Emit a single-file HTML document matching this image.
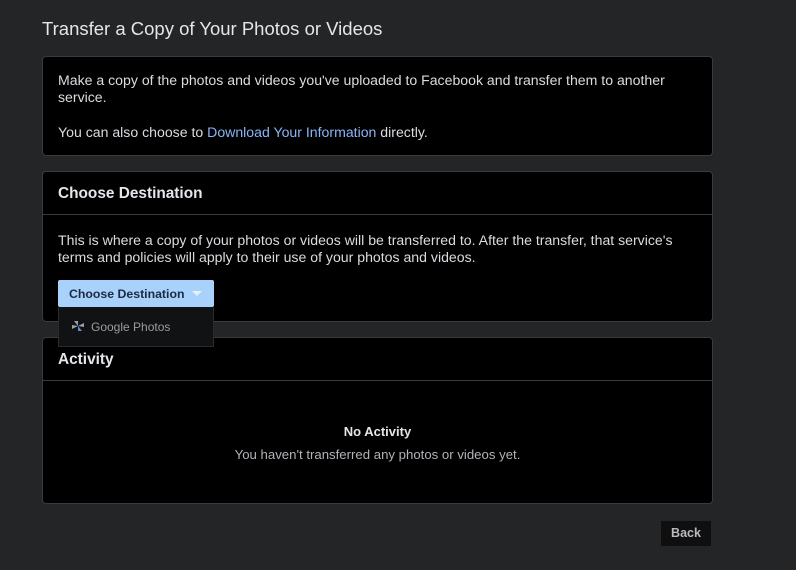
<!DOCTYPE html><html><head><style>
body{margin:0;width:796px;height:570px;background:#242526;font-family:"Liberation Sans",sans-serif;color:#e4e6eb;position:relative;overflow:hidden}
.a{position:absolute}
.card{position:absolute;left:42px;width:671px;background:#000;border:1px solid #3a3b3c;border-radius:4px;box-sizing:border-box}
.t{font-size:14.1px;color:#dadce1;line-height:17px}
h2{margin:0;font-size:15.4px;font-weight:bold;color:#e4e6eb}
</style></head><body>
<div class="a" style="left:42px;top:18px;font-size:18.5px;color:#e4e6eb">Transfer a Copy of Your Photos or Videos</div>
<div class="card" style="top:56px;height:100px">
 <div class="a t" style="left:15px;top:15px;width:640px">Make a copy of the photos and videos you've uploaded to Facebook and transfer them to another service.</div>
 <div class="a t" style="left:15px;top:67px">You can also choose to <span style="color:#8ab4f8">Download Your Information</span> directly.</div>
</div>
<div class="card" style="top:171px;height:151px">
 <h2 class="a" style="left:15px;top:13px">Choose Destination</h2>
 <div class="a" style="left:0;right:0;top:42px;border-top:1px solid #3a3b3c"></div>
 <div class="a t" style="left:15px;top:60px;width:640px">This is where a copy of your photos or videos will be transferred to. After the transfer, that service's terms and policies will apply to their use of your photos and videos.</div>
</div>
<div class="card" style="top:337px;height:167px">
 <h2 class="a" style="left:15px;top:13px">Activity</h2>
 <div class="a" style="left:0;right:0;top:42px;border-top:1px solid #3a3b3c"></div>
 <div class="a" style="left:0;right:0;top:86px;text-align:center;font-size:13px;font-weight:bold;color:#e4e6eb">No Activity</div>
 <div class="a" style="left:0;right:0;top:109px;text-align:center;font-size:13.2px;color:#b0b3b8">You haven't transferred any photos or videos yet.</div>
</div>
<div class="a" style="left:58px;top:280px;width:156px;height:27px;background:#a8d1fb;border-radius:2px">
 <div class="a" style="left:11px;top:7px;font-size:12.3px;font-weight:bold;color:#1c2b41">Choose Destination</div>
 <div class="a" style="left:134px;top:11px;width:0;height:0;border-left:5px solid transparent;border-right:5px solid transparent;border-top:5px solid #e6f0fb"></div>
</div>
<div class="a" style="left:58px;top:307px;width:156px;height:40px;background:#111213;border:1px solid #2a2b2d;border-top:none;box-sizing:border-box">
 <svg class="a" style="left:12px;top:13px" width="14" height="12" viewBox="0 0 14 12"><path d="M7 6L3 1 7 1Z" fill="#9aa0a6"/><path d="M7 6L13 3 13 7Z" fill="#9aa0a6"/><path d="M7 6L11 11 7 11Z" fill="#5b8cd6"/><path d="M7 6L1 9 1 5Z" fill="#9aa0a6"/></svg>
 <div class="a" style="left:32px;top:13px;font-size:12px;color:#9a9ca1">Google Photos</div>
</div>
<div class="a" style="left:661px;top:521px;width:50px;height:25px;background:#0f0f10;font-size:12.5px;font-weight:bold;color:#b8babe;text-align:center;line-height:25px">Back</div>
</body></html>
